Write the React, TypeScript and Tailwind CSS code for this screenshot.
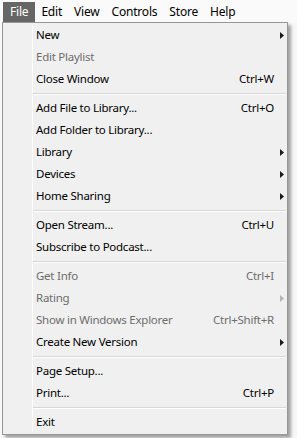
import React from "react";

type Item =
  | { sep: true }
  | { label: string; shortcut?: string; sub?: boolean; disabled?: boolean; sep?: false };

const items: Item[] = [
  { label: "New", sub: true },
  { label: "Edit Playlist", disabled: true },
  { label: "Close Window", shortcut: "Ctrl+W" },
  { sep: true },
  { label: "Add File to Library...", shortcut: "Ctrl+O" },
  { label: "Add Folder to Library..." },
  { label: "Library", sub: true },
  { label: "Devices", sub: true },
  { label: "Home Sharing", sub: true },
  { sep: true },
  { label: "Open Stream...", shortcut: "Ctrl+U" },
  { label: "Subscribe to Podcast..." },
  { sep: true },
  { label: "Get Info", shortcut: "Ctrl+I", disabled: true },
  { label: "Rating", sub: true, disabled: true },
  { label: "Show in Windows Explorer", shortcut: "Ctrl+Shift+R", disabled: true },
  { label: "Create New Version", sub: true },
  { sep: true },
  { label: "Page Setup..." },
  { label: "Print...", shortcut: "Ctrl+P" },
  { sep: true },
  { label: "Exit" },
];

const menus = ["Edit", "View", "Controls", "Store", "Help"];

function Arrow({ disabled }: { disabled?: boolean }) {
  return (
    <svg width="4" height="7" viewBox="0 0 4 7" className={disabled ? "fill-[#b5b5b5]" : "fill-[#1a1a1a]"}>
      <path d="M0 0 L4 3.5 L0 7 Z" />
    </svg>
  );
}

export default function App() {
  return (
    <div
      className="w-[297px] h-[438px] bg-[#f7f7f7] text-[11.5px] tracking-[-0.25px] text-black overflow-hidden"
      style={{ fontFamily: '"Noto Sans", "Open Sans", sans-serif' }}
    >
      <div className="h-[22px] flex items-stretch bg-[#fafafa] pl-[3px] pt-[2px] text-[12px] tracking-[-0.2px]">
        <div className="bg-[#666666] text-white px-[7px] flex items-center h-[20px]">File</div>
        {menus.map((m) => (
          <div key={m} className="px-[6px] flex items-center h-[20px]">
            {m}
          </div>
        ))}
      </div>
      <div className="ml-[2px] w-[286px] border border-[#979797] bg-[#f0f0f0] shadow-[3px_3px_3px_rgba(0,0,0,0.35)] relative py-[1px]">
        <div className="absolute left-[29px] top-[2px] bottom-[2px] w-px bg-[#e2e2e2] border-r border-white" />
        {items.map((it, i) =>
          it.sep ? (
            <div key={i} className="h-[7px] flex items-center pl-[30px] pr-[1px]">
              <div className="h-[2px] w-full border-t border-[#d7d7d7] border-b border-b-white" />
            </div>
          ) : (
            <div
              key={i}
              className={`h-[22px] flex items-center pl-[33px] pr-[3px] ${it.disabled ? "text-[#6d6d6d]" : ""}`}
            >
              <span className="flex-1 whitespace-nowrap">{it.label}</span>
              {it.shortcut && <span className="whitespace-nowrap pr-[10px]">{it.shortcut}</span>}
              {it.sub && <Arrow disabled={it.disabled} />}
            </div>
          )
        )}
      </div>
    </div>
  );
}
